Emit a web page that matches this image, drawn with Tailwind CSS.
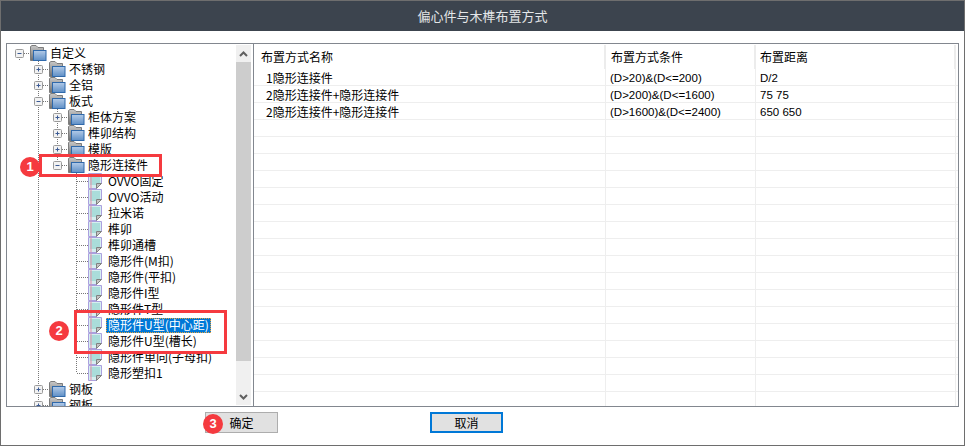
<!DOCTYPE html>
<html lang="zh-CN">
<head>
  <meta charset="UTF-8" />
  <title>偏心件与木榫布置方式</title>
  <script src="https://cdn.jsdelivr.net/npm/@tailwindcss/browser@4"></script>
</head>
<body class="bg-white">
  <svg class="absolute w-0 h-0">
    <defs>
      <linearGradient id="blue" x1="0" y1="0" x2="0" y2="1">
        <stop offset="0" stop-color="#b3cbe8" />
        <stop offset="1" stop-color="#5f8fc6" />
      </linearGradient>
      <linearGradient id="grey" x1="0" y1="0" x2="0" y2="1">
        <stop offset="0" stop-color="#c8c8c8" />
        <stop offset="1" stop-color="#6f6f6f" />
      </linearGradient>
      <symbol id="folder" viewBox="0 0 17 16">
        <path d="M.5 15.5V1.500L2 .5h4l2 2h5.500v3H4v10z" fill="url(#grey)" stroke="#7d7d7d" />
        <rect x="3.500" y="5.500" width="12.500" height="10" fill="url(#blue)" stroke="#2f69ab" />
      </symbol>
      <symbol id="leaf" viewBox="0 0 14 16">
        <path d="M.5.5h13v10l-5 5h-8z" fill="#d6eef0" stroke="#aaa0de" />
        <path d="M2 3h10M2 5h10M2 7h10M2 9h10M2 11h6" stroke="#7fcbc4" />
        <path d="M3 .5v15" stroke="#e58fa8" />
        <path d="M8.500 15.500v-5h5z" fill="#c4c4c4" stroke="#808080" />
      </symbol>
    </defs>
  </svg>

  <div class="relative w-[965px] h-[446px] overflow-hidden border border-[#6e6e6e] flex flex-col text-[12px] text-black font-['Liberation_Sans','Noto_Sans_CJK_SC',sans-serif]">
    <!-- Title bar -->
    <div class="h-[30px] shrink-0 bg-[#3c444e] text-[#e4e6e8] text-[13px] flex items-center justify-center font-['Noto_Sans_CJK_SC',sans-serif]">偏心件与木榫布置方式</div>

    <!-- Panels -->
    <div class="mt-3 ml-[5px] w-[953px] h-[364px] shrink-0 border border-[#82878f] flex">
      <!-- Tree -->
      <div class="w-[247px] shrink-0 border-r border-[#82878f] flex overflow-hidden">
        <div id="tree" class="w-[229px] shrink-0 pt-px pl-[3px] overflow-hidden"></div>
        <!-- Scrollbar -->
        <div class="w-[15px] mt-px mb-px shrink-0 bg-[#f0f0f0] flex flex-col">
          <div class="h-[17px] flex items-center justify-center">
            <svg width="9" height="6" viewBox="0 0 9 6"><path d="M1 5l3.500-3.500L8 5" fill="none" stroke="#606060" stroke-width="2" /></svg>
          </div>
          <div class="h-[299px] bg-[#cdcdcd]"></div>
          <div class="flex-1 flex items-end justify-center pb-[5px]">
            <svg width="9" height="6" viewBox="0 0 9 6"><path d="M1 1l3.500 3.500L8 1" fill="none" stroke="#606060" stroke-width="2" /></svg>
          </div>
        </div>
      </div>

      <!-- Table -->
      <div class="flex-1 overflow-hidden">
        <div class="h-[25px] pt-px flex font-['Noto_Sans_CJK_SC',sans-serif]">
          <div class="w-[352px] pl-[7px] border-r-2 border-[#ececec] flex items-center">布置方式名称</div>
          <div class="w-[150px] pl-[5px] border-r-2 border-[#ececec] flex items-center">布置方式条件</div>
          <div class="w-[200px] pl-[4px] border-r-2 border-[#ececec] flex items-center">布置距离</div>
        </div>
        <div id="rows"></div>
      </div>
    </div>

    <!-- Buttons -->
    <div class="mt-[5px] flex pl-[204px] gap-[152px] font-['Noto_Sans_CJK_SC',sans-serif]">
      <button class="w-[73px] h-[21px] bg-[#e1e1e1] border border-[#adadad]">确定</button>
      <button class="w-[73px] h-[21px] bg-[#e1e1e1] border-2 border-[#0078d7]">取消</button>
    </div>

    <!-- Annotations -->
    <div class="absolute left-[38px] top-[153px] w-[123px] h-[23px] border-[3px] border-[#f53a3f]"></div>
    <div class="absolute left-[73px] top-[309px] w-[153px] h-[44px] border-[3px] border-[#f53a3f]"></div>
    <div class="absolute left-[19px] top-[156px] size-5 rounded-full bg-[#f53a3f] text-white text-[13px] font-bold flex items-center justify-center">1</div>
    <div class="absolute left-[48px] top-[320px] size-5 rounded-full bg-[#f53a3f] text-white text-[13px] font-bold flex items-center justify-center">2</div>
    <div class="absolute left-[202px] top-[413px] size-5 rounded-full bg-[#f53a3f] text-white text-[13px] font-bold flex items-center justify-center">3</div>
  </div>

  <script>
    // [guides, node type, label]  guides: one letter per 19px cell
    // " " empty, "v" line, "t" tee, "l" corner, "+" closed, "-" open,
    // "r" open root (line below only), "e" open last child (line above only)
    const nodes = [
      ["r", "folder", "自定义"],
      [" +", "folder", "不锈钢"],
      [" +", "folder", "全铝"],
      [" -", "folder", "板式"],
      [" v+", "folder", "柜体方案"],
      [" v+", "folder", "榫卯结构"],
      [" v+", "folder", "模版"],
      [" ve", "folder", "隐形连接件"],
      [" v t", "leaf", "OVVO固定"],
      [" v t", "leaf", "OVVO活动"],
      [" v t", "leaf", "拉米诺"],
      [" v t", "leaf", "榫卯"],
      [" v t", "leaf", "榫卯通槽"],
      [" v t", "leaf", "隐形件(M扣)"],
      [" v t", "leaf", "隐形件(平扣)"],
      [" v t", "leaf", "隐形件I型"],
      [" v t", "leaf", "隐形件T型"],
      [" v t", "leaf", "隐形件U型(中心距)", true],
      [" v t", "leaf", "隐形件U型(槽长)"],
      [" v t", "leaf", "隐形件单向(子母扣)"],
      [" v l", "leaf", "隐形塑扣1"],
      [" +", "folder", "钢板"],
      [" +", "folder", "钢板"]
    ];

    function cell(kind) {
      const dot = 'stroke="#777" stroke-dasharray="1 1"';
      let lines = "";
      if (kind === "v" || kind === "t" || kind === "+" || kind === "-") lines += `<path d="M9.500 0v16" ${dot} />`;
      if (kind === "l" || kind === "e") lines += `<path d="M9.500 0v8" ${dot} />`;
      if (kind === "r") lines += `<path d="M9.500 8v8" ${dot} />`;
      if (kind === "t" || kind === "l") lines += `<path d="M10 8.500h11" ${dot} />`;
      if ("+-re".includes(kind)) {
        lines += `<path d="M14 8.500h5" ${dot} />`;
        lines += `<rect x="5.500" y="4.500" width="8" height="8" rx="1" fill="#f2f2f2" stroke="#9a9a9a" />`;
        lines += `<path d="M7.500 8.500h4" stroke="#3b5a94" />`;
        if (kind === "+") lines += `<path d="M9.500 6.500v4" stroke="#3b5a94" />`;
      }
      return `<svg width="19" height="16" class="shrink-0 overflow-visible">${lines}</svg>`;
    }

    document.getElementById("tree").innerHTML = nodes.map(([guides, type, label, selected]) => {
      const cells = guides.split("").map(cell).join("");
      const icon = type === "folder"
        ? '<svg width="17" height="16" class="shrink-0 ml-px"><use href="#folder" /></svg>'
        : '<svg width="14" height="16" class="shrink-0 ml-[2px]"><use href="#leaf" /></svg>';
      const text = selected
        ? `<span class="ml-1 px-[2px] h-[15px] leading-[14px] bg-[#0078d7] text-white outline-1 outline-dotted outline-[#e8a33d] -outline-offset-1 whitespace-nowrap">${label}</span>`
        : `<span class="${type === "folder" ? "ml-[3px]" : "ml-[6px]"} whitespace-nowrap">${label}</span>`;
      return `<div class="h-4 flex items-center font-['Noto_Sans_CJK_SC',sans-serif]">${cells}${icon}${text}</div>`;
    }).join("");

    const rows = [
      ["1隐形连接件", "(D>20)&(D<=200)", "D/2"],
      ["2隐形连接件+隐形连接件", "(D>200)&(D<=1600)", "75 75"],
      ["2隐形连接件+隐形连接件", "(D>1600)&(D<=2400)", "650 650"]
    ];
    while (rows.length < 20) rows.push(["", "", ""]);

    document.getElementById("rows").innerHTML = rows.map(r => `
      <div class="h-[17px] flex border-b border-[#eeeeee] leading-[18px] text-[11.5px]">
        <div class="w-[352px] pl-[12px] border-r border-[#eeeeee] text-[12px] font-['Noto_Sans_CJK_SC',sans-serif]">${r[0]}</div>
        <div class="w-[150px] pl-[4px] border-r border-[#eeeeee]">${r[1].replace(/</g, "&lt;").replace(/&\(/g, "&amp;(")}</div>
        <div class="w-[200px] pl-[4px] border-r border-[#eeeeee]">${r[2]}</div>
      </div>`).join("");
  </script>
</body>
</html>
